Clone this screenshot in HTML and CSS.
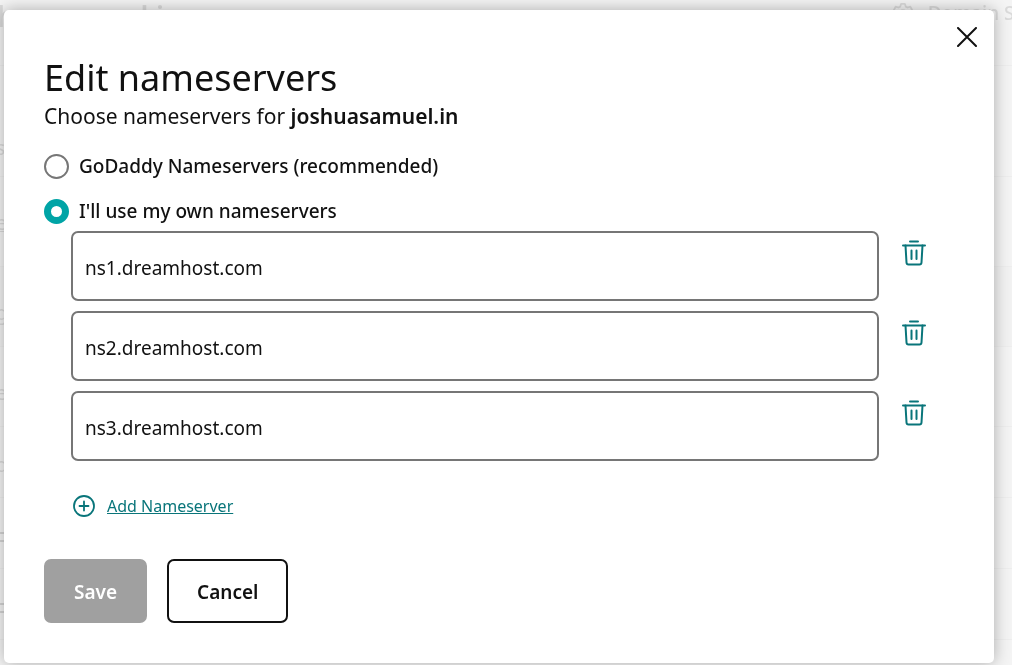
FILE: index.html
```
<!DOCTYPE html>
<html lang="en">
<head>
    <meta charset="utf-8">
    <meta name="viewport" content="width=device-width, initial-scale=1">
    <title>Edit nameservers</title>
    <link rel="stylesheet" href="styles.css">
</head>
<body>
    <!-- Dimmed page under the dialog -->
    <div class="page" aria-hidden="true">
        <div class="page-header">
            <span class="page-title">joshuasamuel.in</span>
            <span class="page-settings">
                <svg width="22" height="22" viewBox="0 0 24 24" fill="none" stroke="currentColor" stroke-width="2">
                    <circle cx="12" cy="12" r="3"/>
                    <path d="M10 2h4l1 3 2 1 3-1 2 4-2 2v2l2 2-2 4-3-1-2 1-1 3h-4l-1-3-2-1-3 1-2-4 2-2v-2L2 9l2-4 3 1 2-1z" stroke-linejoin="round"/>
                </svg>
                Domain Settings
            </span>
        </div>
        <div class="page-row tall">s</div>
        <div class="page-row link">e</div>
        <div class="page-row shaded">g</div>
        <div class="page-row">e</div>
        <div class="page-row short">d</div>
        <div class="page-row short"><i class="toggle"></i></div>
        <div class="page-row short"><i class="toggle"></i></div>
    </div>

    <div class="overlay">
        <form class="modal" role="dialog" aria-labelledby="modal-title">
            <button type="button" class="close" aria-label="Close">
                <svg width="20" height="20" viewBox="0 0 20 20" fill="none" stroke="currentColor" stroke-width="2" stroke-linecap="round">
                    <path d="M1 1l18 18M19 1L1 19"/>
                </svg>
            </button>
            <h1 id="modal-title">Edit nameservers</h1>
            <p class="subtitle">Choose nameservers for <strong>joshuasamuel.in</strong></p>

            <label class="option">
                <input type="radio" name="ns-type" value="default">
                GoDaddy Nameservers (recommended)
            </label>
            <label class="option">
                <input type="radio" name="ns-type" value="custom" checked>
                I'll use my own nameservers
            </label>

            <div class="nameservers">
                <div class="ns-row">
                    <input type="text" class="ns-input" aria-label="Nameserver 1" value="ns1.dreamhost.com">
                    <button type="button" class="delete" aria-label="Delete nameserver 1">
                        <svg width="24" height="26" viewBox="0 0 24 26"><use href="#trash"/></svg>
                    </button>
                </div>
                <div class="ns-row">
                    <input type="text" class="ns-input" aria-label="Nameserver 2" value="ns2.dreamhost.com">
                    <button type="button" class="delete" aria-label="Delete nameserver 2">
                        <svg width="24" height="26" viewBox="0 0 24 26"><use href="#trash"/></svg>
                    </button>
                </div>
                <div class="ns-row">
                    <input type="text" class="ns-input" aria-label="Nameserver 3" value="ns3.dreamhost.com">
                    <button type="button" class="delete" aria-label="Delete nameserver 3">
                        <svg width="24" height="26" viewBox="0 0 24 26"><use href="#trash"/></svg>
                    </button>
                </div>
                <a href="#" class="add">
                    <svg width="22" height="22" viewBox="0 0 22 22" fill="none" stroke="currentColor" stroke-width="1.8" stroke-linecap="round">
                        <circle cx="11" cy="11" r="10"/>
                        <path d="M11 6.5v9M6.5 11h9"/>
                    </svg>
                    <span>Add Nameserver</span>
                </a>
            </div>

            <div class="actions">
                <button type="submit" class="btn btn-save" disabled>Save</button>
                <button type="button" class="btn btn-cancel">Cancel</button>
            </div>
        </form>
    </div>

    <svg class="sprite" aria-hidden="true">
        <symbol id="trash" viewBox="0 0 24 26">
            <g fill="none" stroke="currentColor" stroke-width="2" stroke-linecap="round" stroke-linejoin="round">
                <path d="M8 1.500h8M1 5.500h22"/>
                <path d="M3.500 5.500l1 17q.1 2 2 2h11q1.900 0 2-2l1-17"/>
                <path d="M9.500 10.500v8.500M14.500 10.500v8.500"/>
            </g>
        </symbol>
    </svg>
</body>
</html>
```
FILE: styles.css
```
* {
    box-sizing: border-box;
}
body {
    margin: 0;
    background-color: #f4f4f4;
    color: #111;
    font-family: "Noto Sans", sans-serif;
    font-size: 19px;
}

/* Page in the background */
.page {
    position: fixed;
    inset: 0;
    overflow: hidden;
    color: #dadada;
}
.page-header {
    display: flex;
    justify-content: space-between;
    height: 66px;
    border-bottom: 1px solid #eee;
}
.page-title {
    margin-left: -42px;
    font-size: 28px;
    line-height: 32px;
    font-weight: 600;
}
.page-settings {
    display: flex;
    align-items: center;
    gap: 14px;
    height: 26px;
    margin-right: -66px;
    font-weight: 500;
}
.page-row {
    height: 80px;
    padding-top: 34px;
    margin-left: -4px;
    border-bottom: 1px solid #eee;
    line-height: 24px;
}
.page-row.tall {
    height: 111px;
    padding-top: 70px;
}
.page-row.link {
    height: 90px;
    text-decoration: underline;
}
.page-row.shaded {
    background-color: #f2f2f2;
}
.page-row.short {
    height: 71px;
    padding-top: 26px;
}
.toggle {
    display: block;
    width: 8px;
    height: 10px;
    margin-top: 8px;
    border: 2px solid #d4d4d4;
    border-width: 2px 0;
}

/* Dialog */
.overlay {
    position: relative;
    min-height: 100vh;
    padding: 10px 18px 2px 4px;
    display: flex;
}
.modal {
    position: relative;
    flex: 1;
    padding: 48px 40px 40px;
    background-color: #fff;
    border-radius: 5px;
    box-shadow: 0 0 16px rgba(0, 0, 0, 0.3);
}
.close {
    position: absolute;
    top: 17px;
    right: 17px;
    display: flex;
    padding: 0;
    border: 0;
    background: none;
    color: #111;
    cursor: pointer;
}
h1 {
    margin: 0;
    font-size: 36px;
    line-height: 40px;
    font-weight: 400;
}
.subtitle {
    margin: 2px 0 20px;
    font-size: 21px;
    line-height: 32px;
}
.subtitle strong {
    font-weight: 600;
}
.option {
    display: flex;
    align-items: center;
    gap: 10px;
    height: 28px;
    margin-bottom: 17px;
    font-weight: 500;
}
.option input {
    appearance: none;
    width: 25px;
    height: 25px;
    margin: 0;
    border: 2px solid #767676;
    border-radius: 50%;
}
.option input:checked {
    border: 7px solid #00a4a6;
}
.nameservers {
    margin: -11px 26px 0 27px;
}
.ns-row {
    display: flex;
    align-items: flex-start;
    gap: 23px;
    margin-bottom: 10px;
}
.ns-input {
    flex: 1;
    min-width: 0;
    height: 70px;
    padding: 4px 12px 0;
    border: 2px solid #767676;
    border-radius: 7px;
    color: #111;
    font: inherit;
}
.delete {
    display: flex;
    padding: 9px 2px 0 0;
    border: 0;
    background: none;
    color: #09757a;
    cursor: pointer;
}
.add {
    display: flex;
    align-items: center;
    gap: 12px;
    width: fit-content;
    margin: 33px 0 0 2px;
    color: #09757a;
    font-size: 16px;
    line-height: 24px;
}
.actions {
    display: flex;
    gap: 20px;
    margin-top: 41px;
}
.btn {
    height: 64px;
    padding: 2px 28px 0;
    border: 2px solid #111;
    border-radius: 7px;
    background-color: #fff;
    color: #111;
    font: inherit;
    font-weight: 600;
}
.btn-save {
    border-color: #a0a0a0;
    background-color: #a0a0a0;
    color: #fff;
}
.sprite {
    display: none;
}
```
